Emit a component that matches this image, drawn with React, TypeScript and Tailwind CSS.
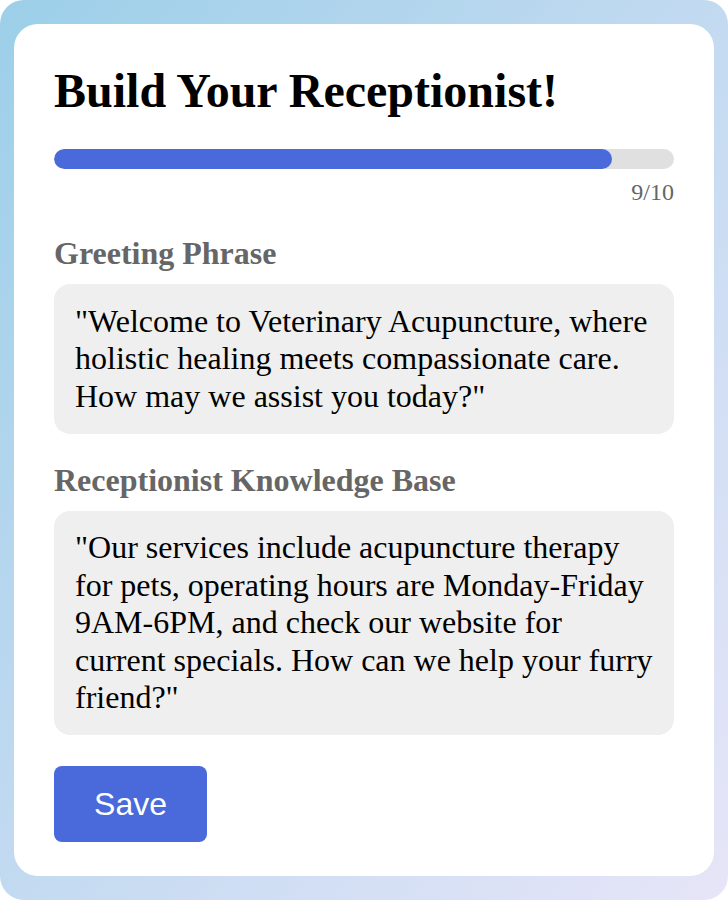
import React from "react";

export default function App() {
  const serif = { fontFamily: '"Liberation Serif", "Times New Roman", serif' };
  return (
    <div className="w-[728px] h-[900px] rounded-3xl bg-gradient-to-br from-[#9ccfe9] to-[#e7e5f8] px-[14px] pt-[24px] pb-[24px]" style={serif}>
      <div className="bg-white rounded-3xl h-full px-10 pt-10 pb-[34px] flex flex-col">
        <h1 className="text-[48px] leading-[54px] font-bold text-black">Build Your Receptionist!</h1>
        <div className="mt-[31px] h-[20px] w-full rounded-full bg-[#e0e0e0] overflow-hidden">
          <div className="h-full w-[90%] rounded-full bg-[#4a69db]" />
        </div>
        <div className="mt-[9px] text-right text-[24px] leading-[28px] text-[#666666]">9/10</div>

        <div className="mt-[29px] text-[32px] leading-[37.5px] font-bold text-[#666666]">Greeting Phrase</div>
        <div className="mt-[11px] rounded-2xl bg-[#efefef] px-[21px] py-[19px] text-[32px] leading-[37.5px] text-black">
          "Welcome to Veterinary Acupuncture, where holistic healing meets compassionate care. How may we assist you today?"
        </div>

        <div className="mt-[28px] text-[32px] leading-[37.5px] font-bold text-[#666666]">Receptionist Knowledge Base</div>
        <div className="mt-[11px] rounded-2xl bg-[#efefef] px-[21px] py-[18.5px] text-[32px] leading-[37.5px] text-black">
          "Our services include acupuncture therapy for pets, operating hours are Monday-Friday 9AM-6PM, and check our website for current specials. How can we help your furry friend?"
        </div>

        <div className="mt-[31px]">
          <button
            className="w-[153px] h-[76px] rounded-lg bg-[#4a69db] text-white text-[32px] leading-[37px] flex items-center justify-center"
            style={{ fontFamily: '"Liberation Sans", Arial, Helvetica, sans-serif' }}
          >
            Save
          </button>
        </div>
      </div>
    </div>
  );
}
